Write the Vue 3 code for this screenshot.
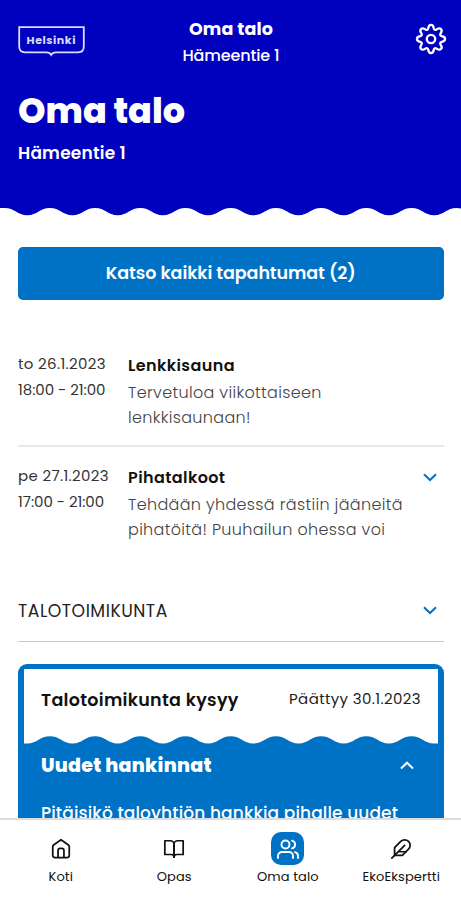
<script setup>
import { ref } from 'vue';

const events = [
    {
        id: 1,
        date: 'to 26.1.2023',
        time: '18:00 - 21:00',
        title: 'Lenkkisauna',
        lines: ['Tervetuloa viikottaiseen', 'lenkkisaunaan!'],
        expandable: false
    },
    {
        id: 2,
        date: 'pe 27.1.2023',
        time: '17:00 - 21:00',
        title: 'Pihatalkoot',
        lines: ['Tehdään yhdessä rästiin jääneitä', 'pihatöitä! Puuhailun ohessa voi'],
        expandable: true
    }
];

const tabs = [
    { id: 'home', label: 'Koti' },
    { id: 'guide', label: 'Opas' },
    { id: 'house', label: 'Oma talo' },
    { id: 'expert', label: 'EkoEkspertti' }
];

const activeTab = ref('house');

// Wave edge, 45.2px per period, 7px high
const buildWave = (start, periods, width) => {
    let d = `M0 0H${start}`;
    for (let i = 0; i < periods; i++) {
        d += 'c10 0 12.6 7.2 22.6 7.2s12.6-7.2 22.6-7.2';
    }
    return d + `H${width}V-1H0Z`;
};

const headerWave = buildWave(4.7, 11, 510);
const cardWave = 'M0-1V7.4H3.3c10 0 12.6-7.2 22.6-7.2'
    + 's12.6 7.2 22.6 7.2s12.6-7.2 22.6-7.2'.repeat(8)
    + 's12.6 7.2 22.6 7.2H414V-1Z';
</script>

<template>
    <div class="app">
        <header class="header">
            <div class="topbar">
                <svg class="logo" width="68" height="32" viewBox="0 0 68 32">
                    <path
                        d="M1.2 1.2H65.8V20.5Q65.8 26.3 60 26.3H38Q34.5 26.3 33.2 28.8Q32 26.3 28.5 26.3H7Q1.2 26.3 1.2 20.5Z"
                        fill="none" stroke="#dcdcff" stroke-width="1.8"
                    />
                    <text x="8.5" y="17.8" textLength="49" class="logo-text">Helsinki</text>
                </svg>
                <div class="topbar-center">
                    <div class="topbar-title">Oma talo</div>
                    <div class="topbar-address">Hämeentie 1</div>
                </div>
                <svg class="gear" width="32" height="32" viewBox="-16 -16 32 32" fill="none" stroke="#fff" stroke-width="2.3" stroke-linejoin="round">
                    <circle r="4.2" />
                    <path d="M-2.8-10.7C-2-15.2 2-15.2 2.8-10.7Q3.5-8.4 5.6-9.6C9.4-12.2 12.2-9.4 9.6-5.6Q8.4-3.5 10.7-2.8C15.2-2 15.2 2 10.7 2.8Q8.4 3.5 9.6 5.6C12.2 9.4 9.4 12.2 5.6 9.6Q3.5 8.4 2.8 10.7C2 15.2-2 15.2-2.8 10.7Q-3.5 8.4-5.6 9.6C-9.4 12.2-12.2 9.4-9.6 5.6Q-8.4 3.5-10.7 2.8C-15.2 2-15.2-2-10.7-2.8Q-8.4-3.5-9.6-5.6C-12.2-9.4-9.4-12.2-5.6-9.6Q-3.5-8.4-2.8-10.7Z" />
                </svg>
            </div>
            <h1 class="page-title">Oma talo</h1>
            <p class="page-address">Hämeentie 1</p>
        </header>
        <svg class="header-wave" width="461" height="8" viewBox="0 0 461 8">
            <path :d="headerWave" fill="#0000bf" />
        </svg>

        <main class="content">
            <button class="all-events">Katso kaikki tapahtumat (2)</button>

            <section class="events">
                <article v-for="event in events" :key="event.id" class="event">
                    <div class="event-when">
                        <div class="event-date">{{ event.date }}</div>
                        <div class="event-time">{{ event.time }}</div>
                    </div>
                    <div class="event-body">
                        <h3 class="event-title">{{ event.title }}</h3>
                        <p v-for="line in event.lines" :key="line" class="event-text">{{ line }}</p>
                    </div>
                    <svg v-if="event.expandable" class="chevron" width="14" height="9" viewBox="0 0 14 9">
                        <path d="M1 1.2L7 7L13 1.2" />
                    </svg>
                </article>
            </section>

            <div class="section-head">
                <span class="section-name">TALOTOIMIKUNTA</span>
                <svg class="chevron" width="14" height="9" viewBox="0 0 14 9">
                    <path d="M1 1.2L7 7L13 1.2" />
                </svg>
            </div>

            <section class="poll">
                <div class="poll-head">
                    <h3 class="poll-title">Talotoimikunta kysyy</h3>
                    <span class="poll-ends">Päättyy 30.1.2023</span>
                </div>
                <svg class="poll-wave" width="414" height="8" viewBox="0 0 414 8">
                    <path :d="cardWave" fill="#fff" />
                </svg>
                <div class="poll-topic">
                    <h3 class="topic-title">Uudet hankinnat</h3>
                    <svg class="chevron chevron-light" width="14" height="9" viewBox="0 0 14 9">
                        <path d="M1 7.5L7 1.7L13 7.5" />
                    </svg>
                </div>
                <p class="poll-text">Pitäisikö taloyhtiön hankkia pihalle uudet</p>
            </section>
        </main>

        <nav class="tabbar">
            <a
                v-for="tab in tabs"
                :key="tab.id"
                class="tab"
                :class="{ active: tab.id === activeTab }"
                @click="activeTab = tab.id"
            >
                <span class="tab-icon">
                    <svg v-if="tab.id === 'home'" width="22" height="22" viewBox="0 0 24 24">
                        <path d="M3 9.5q0-1.2.9-1.9L12 2l8.1 5.6q.9.7.9 1.9V19a2.3 2.3 0 0 1-2.3 2.3H5.3A2.3 2.3 0 0 1 3 19Z" />
                        <path d="M8.8 21v-7.5a2.3 2.3 0 0 1 2.3-2.3h1.8a2.3 2.3 0 0 1 2.3 2.3V21" />
                    </svg>
                    <svg v-else-if="tab.id === 'guide'" width="22" height="22" viewBox="0 0 24 24">
                        <path d="M2 3h6a4 4 0 0 1 4 4v14a3 3 0 0 0-3-3H2z" />
                        <path d="M22 3h-6a4 4 0 0 0-4 4v14a3 3 0 0 1 3-3h7z" />
                    </svg>
                    <svg v-else-if="tab.id === 'house'" width="24" height="24" viewBox="0 0 24 24">
                        <circle cx="9.5" cy="7.5" r="4" />
                        <path d="M2 21v-2a4 4 0 0 1 4-4h7a4 4 0 0 1 4 4v2" />
                        <path d="M16 3.6a4 4 0 0 1 0 7.8" />
                        <path d="M19 15.2a4 4 0 0 1 3 3.8v2" />
                    </svg>
                    <svg v-else width="22" height="22" viewBox="0 0 24 24">
                        <path d="M20.2 12.2a6 6 0 0 0-8.5-8.5L5 10.5V19h8.5z" />
                        <path d="M16 8L2 22M17.5 15H9" />
                    </svg>
                </span>
                <span class="tab-label">{{ tab.label }}</span>
            </a>
        </nav>
    </div>
</template>

<style>
body {
    margin: 0;
    background: #fff;
}
</style>

<style scoped>
.app {
    display: flex;
    flex-direction: column;
    width: 461px;
    height: 900px;
    overflow: hidden;
    background: #fff;
    color: #111;
    font-family: Poppins, Inter, sans-serif;
    font-feature-settings: 'cv11';
    white-space: nowrap;
}

h1,
h3,
p {
    margin: 0;
}

svg {
    display: block;
    flex: none;
}

.header {
    flex: none;
    box-sizing: border-box;
    height: 208px;
    padding: 16px 14px 0 18px;
    background: #0000bf;
    color: #fff;
}

.topbar {
    display: grid;
    grid-template-columns: 80px 1fr 80px;
    height: 70px;
}

.logo {
    margin-top: 10px;
}

.logo-text {
    fill: #dcdcff;
    font-size: 11px;
    font-weight: 700;
}

.topbar-center {
    text-align: center;
    margin-right: 3px;
}

.topbar-title {
    font-size: 17.5px;
    font-weight: 700;
    letter-spacing: 0.1px;
    line-height: 26px;
}

.topbar-address {
    font-size: 16px;
    font-weight: 500;
    letter-spacing: -0.15px;
    line-height: 27px;
}

.gear {
    justify-self: end;
    margin-top: 7px;
}

.page-title {
    font-size: 35px;
    font-weight: 800;
    line-height: 50px;
}

.page-address {
    font-size: 17px;
    font-weight: 600;
    letter-spacing: 0.2px;
    line-height: 34px;
}

.header-wave {
    height: 8px;
}

.content {
    display: flex;
    flex-direction: column;
    flex: 1;
    min-height: 0;
    overflow: hidden;
    padding: 31px 17.5px 0 18px;
}

.all-events {
    flex: none;
    height: 52.5px;
    border: 0;
    border-radius: 5px;
    background: #0072c6;
    color: #fff;
    font: inherit;
    font-feature-settings: inherit;
    font-size: 17.5px;
    font-weight: 600;
    letter-spacing: -0.08px;
}

.events {
    margin-top: 39.5px;
}

.event {
    display: flex;
    box-sizing: border-box;
    height: 106px;
    padding-top: 12px;
}

.event + .event {
    height: 112px;
    padding-top: 16px;
    border-top: 2px solid #e8e8e8;
}

.event-when {
    width: 110px;
    color: #333;
    font-size: 15px;
    line-height: 25.5px;
}

.event-date {
    letter-spacing: 0.34px;
}

.event-time {
    letter-spacing: -0.05px;
}

.event-body {
    flex: 1;
}

.event-title {
    font-size: 16px;
    font-weight: 600;
    letter-spacing: 0.4px;
    line-height: 26.5px;
    padding-top: 2px;
}

.event-text {
    color: #444;
    font-size: 16px;
    font-weight: 300;
    letter-spacing: 0.33px;
    line-height: 25.3px;
}

.chevron {
    margin-right: 6.5px;
    fill: none;
    stroke: #0072c6;
    stroke-width: 2;
}

.event .chevron {
    margin-top: 9.5px;
}

.chevron-light {
    margin-right: 0;
    stroke: #fff;
}

.section-head {
    display: flex;
    flex: none;
    align-items: center;
    justify-content: space-between;
    height: 59px;
    margin-top: 24px;
    padding-bottom: 1px;
    border-bottom: 1px solid #ccc;
}

.section-name {
    color: #222;
    font-size: 17.2px;
    letter-spacing: 0.5px;
}

.poll {
    flex: none;
    height: 190px;
    margin-top: 22px;
    padding: 5px 5.5px 0;
    border-radius: 9px;
    background: #0072c6;
}

.poll-head {
    display: flex;
    justify-content: space-between;
    box-sizing: border-box;
    height: 67px;
    padding: 17px 17px 0 17.5px;
    background: #fff;
}

.poll-title {
    font-size: 17.5px;
    font-weight: 600;
    letter-spacing: 0.3px;
    line-height: 28px;
}

.poll-ends {
    color: #222;
    font-size: 15px;
    letter-spacing: 0.37px;
    line-height: 26px;
}

.poll-topic {
    display: flex;
    align-items: center;
    justify-content: space-between;
    height: 43px;
    padding: 0 24px 0 17.5px;
}

.topic-title {
    color: #fff;
    font-size: 19px;
    font-weight: 800;
    letter-spacing: 0.25px;
}

.poll-text {
    padding: 14px 17.5px 0;
    color: #fff;
    font-size: 17px;
    font-weight: 500;
    letter-spacing: 0.12px;
    line-height: 25px;
}

.tabbar {
    display: flex;
    flex: none;
    box-sizing: border-box;
    height: 82px;
    padding: 12px 3px 0 4px;
    border-top: 2px solid #ddd;
    background: #fff;
}

.tab {
    display: flex;
    flex: 1;
    flex-direction: column;
    align-items: center;
    color: #111;
}

.tab-icon {
    display: flex;
    align-items: center;
    justify-content: center;
    width: 33px;
    height: 33px;
    border-radius: 10px;
}

.tab-icon svg {
    fill: none;
    stroke: currentColor;
    stroke-width: 1.9;
    stroke-linecap: round;
    stroke-linejoin: round;
}

.active .tab-icon {
    background: #0072c6;
    color: #fff;
}

.tab-label {
    margin-top: 3px;
    font-size: 13px;
    letter-spacing: 0.1px;
    line-height: 17px;
}
</style>
